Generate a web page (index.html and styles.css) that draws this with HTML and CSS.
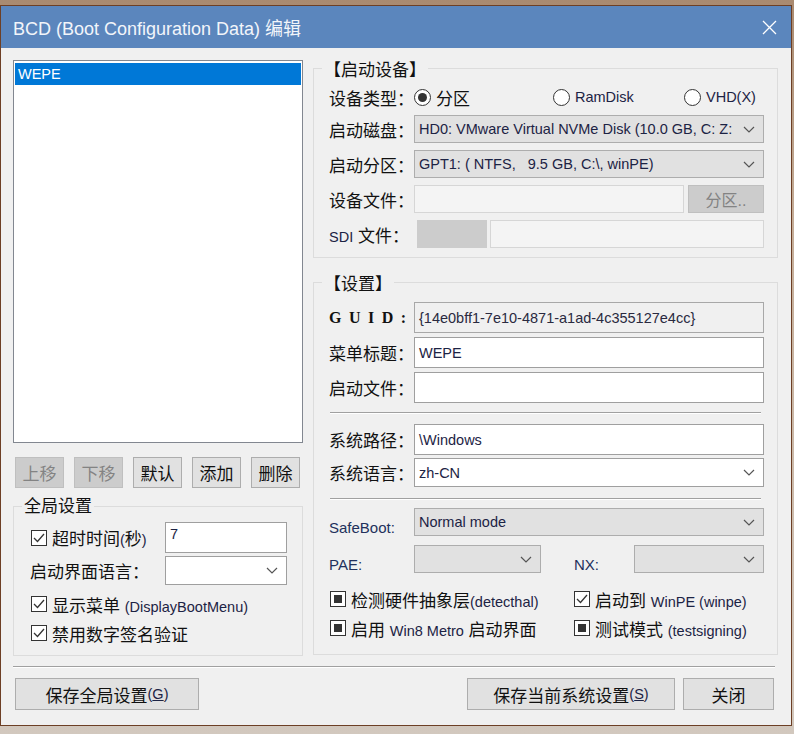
FILE: index.html
```html
<!DOCTYPE html>
<html lang="zh-CN">
	<head>
		<meta charset="UTF-8" />
		<meta name="viewport" content="width=device-width, initial-scale=1.0" />
		<title>BCD (Boot Configuration Data) 编辑</title>
		<link rel="stylesheet" href="styles.css">
	</head>
	<body>
		<div class="window">
			<div class="titlebar">
				<span class="title">BCD (Boot Configuration Data) 编辑</span>
				<svg class="close" width="15" height="15" viewBox="0 0 15 15">
					<path d="M1 1L14 14M14 1L1 14" stroke="#fff" stroke-width="1.3" fill="none" />
				</svg>
			</div>

			<div class="client">
				<div class="panes">
					<!-- boot entry list + global options -->
					<div class="left">
						<div class="listbox">
							<div class="list-item selected">WEPE</div>
						</div>

						<div class="list-buttons">
							<button class="btn disabled">上移</button>
							<button class="btn disabled">下移</button>
							<button class="btn">默认</button>
							<button class="btn">添加</button>
							<button class="btn">删除</button>
						</div>

						<div class="group global">
							<span class="group-title">全局设置</span>
							<div class="row timeout">
								<span class="check"><span class="box checked"><svg width="12" height="10" viewBox="0 0 12 10"><path d="M1 5L4.5 8.5L11 1" /></svg></span><span class="text">超时时间<span class="en">(</span>秒<span class="en">)</span></span></span>
								<div class="textbox small">7</div>
							</div>
							<div class="row lang">
								<span class="label">启动界面语言：</span>
								<div class="combo white small"><span class="value"></span><svg class="chevron" width="12" height="7" viewBox="0 0 12 7"><path d="M1 1L6 6L11 1" /></svg></div>
							</div>
							<div class="row check-row">
								<span class="check"><span class="box checked"><svg width="12" height="10" viewBox="0 0 12 10"><path d="M1 5L4.5 8.5L11 1" /></svg></span><span class="text">显示菜单 <span class="en">(DisplayBootMenu)</span></span></span>
							</div>
							<div class="row check-row">
								<span class="check"><span class="box checked"><svg width="12" height="10" viewBox="0 0 12 10"><path d="M1 5L4.5 8.5L11 1" /></svg></span><span class="text">禁用数字签名验证</span></span>
							</div>
						</div>
					</div>

					<!-- selected entry -->
					<div class="right">
						<div class="group device">
							<span class="group-title">【启动设备】</span>
							<div class="row radios">
								<span class="label">设备类型：</span>
								<span class="radio-item part"><span class="radio on"></span>分区</span>
								<span class="radio-item ram"><span class="radio"></span><span class="en">RamDisk</span></span>
								<span class="radio-item"><span class="radio"></span><span class="en">VHD(X)</span></span>
							</div>
							<div class="row">
								<span class="label">启动磁盘：</span>
								<div class="combo"><span class="value">HD0: VMware Virtual NVMe Disk (10.0 GB, C: Z:</span><svg class="chevron" width="12" height="7" viewBox="0 0 12 7"><path d="M1 1L6 6L11 1" /></svg></div>
							</div>
							<div class="row">
								<span class="label">启动分区：</span>
								<div class="combo"><span class="value">GPT1: ( NTFS,&nbsp;&nbsp; 9.5 GB, C:\, winPE)</span><svg class="chevron" width="12" height="7" viewBox="0 0 12 7"><path d="M1 1L6 6L11 1" /></svg></div>
							</div>
							<div class="row">
								<span class="label">设备文件：</span>
								<div class="textbox disabled"></div>
								<button class="btn disabled part-btn">分区..</button>
							</div>
							<div class="row">
								<span class="label"><span class="en">SDI</span> 文件：</span>
								<div class="sdi-block"></div>
								<div class="textbox disabled"></div>
							</div>
						</div>

						<div class="group settings">
							<span class="group-title">【设置】</span>
							<div class="row">
								<span class="label guid">GUID:</span>
								<div class="textbox readonly">{14e0bff1-7e10-4871-a1ad-4c355127e4cc}</div>
							</div>
							<div class="row gap4">
								<span class="label">菜单标题：</span>
								<div class="textbox">WEPE</div>
							</div>
							<div class="row gap4">
								<span class="label">启动文件：</span>
								<div class="textbox"></div>
							</div>

							<div class="rule sep-a"></div>

							<div class="row">
								<span class="label">系统路径：</span>
								<div class="textbox">\Windows</div>
							</div>
							<div class="row gap3">
								<span class="label">系统语言：</span>
								<div class="combo white"><span class="value">zh-CN</span><svg class="chevron" width="12" height="7" viewBox="0 0 12 7"><path d="M1 1L6 6L11 1" /></svg></div>
							</div>

							<div class="rule sep-b"></div>

							<div class="row low">
								<span class="label en">SafeBoot:</span>
								<div class="combo"><span class="value">Normal mode</span><svg class="chevron" width="12" height="7" viewBox="0 0 12 7"><path d="M1 1L6 6L11 1" /></svg></div>
							</div>
							<div class="row low pae">
								<span class="label en">PAE:</span>
								<div class="combo pae-box"><span class="value"></span><svg class="chevron" width="12" height="7" viewBox="0 0 12 7"><path d="M1 1L6 6L11 1" /></svg></div>
								<span class="label en nx">NX:</span>
								<div class="combo"><span class="value"></span><svg class="chevron" width="12" height="7" viewBox="0 0 12 7"><path d="M1 1L6 6L11 1" /></svg></div>
							</div>

							<div class="row flags first">
								<span class="check col"><span class="box mixed"></span><span class="text">检测硬件抽象层<span class="en">(detecthal)</span></span></span>
								<span class="check"><span class="box checked"><svg width="12" height="10" viewBox="0 0 12 10"><path d="M1 5L4.5 8.5L11 1" /></svg></span><span class="text">启动到 <span class="en">WinPE (winpe)</span></span></span>
							</div>
							<div class="row flags">
								<span class="check col"><span class="box mixed"></span><span class="text">启用 <span class="en">Win8 Metro</span> 启动界面</span></span>
								<span class="check"><span class="box mixed"></span><span class="text">测试模式 <span class="en">(testsigning)</span></span></span>
							</div>
						</div>
					</div>
				</div>

				<div class="rule footer-rule"></div>

				<div class="footer">
					<button class="btn save-global">保存全局设置<span class="en">(<u>G</u>)</span></button>
					<span class="spacer"></span>
					<button class="btn save-entry">保存当前系统设置<span class="en">(<u>S</u>)</span></button>
					<button class="btn close-btn">关闭</button>
				</div>
			</div>
		</div>
	</body>
</html>
```

FILE: styles.css
```css
* {
	margin: 0;
	padding: 0;
	box-sizing: border-box;
}

body {
	width: 794px;
	height: 734px;
	overflow: hidden;
	font-family: "Liberation Sans", "Noto Sans CJK SC", sans-serif;
	font-size: 17px;
	color: #111;
	background: linear-gradient(180deg, #a98a70 0, #c4ad98 30%, #d2c8be 100%);
}

.en {
	font-size: 14.5px;
	color: #1c2344;
}

button {
	font: inherit;
	color: inherit;
}

/* window frame */

.window {
	margin-top: 5px;
	width: 792px;
	height: 721px;
	border: 1px solid #6d3f25;
	background: #f0f0f0;
	display: flex;
	flex-direction: column;
}

.titlebar {
	height: 42px;
	flex: none;
	background: #5b86bd;
	color: #f2f5fa;
	font-size: 18px;
	display: flex;
	align-items: center;
	justify-content: space-between;
	padding: 0 14px 0 12px;
}

.close {
	display: block;
}

.client {
	flex: 1;
	display: flex;
	flex-direction: column;
	padding: 12px 0 0 12px;
}

.panes {
	display: flex;
	gap: 10px;
}

.left {
	width: 290px;
	flex: none;
}

.right {
	width: 465px;
	flex: none;
}

/* list of boot entries */

.listbox {
	height: 383px;
	background: #fff;
	border: 1px solid #828790;
	padding: 2px 1px;
}

.list-item {
	height: 22px;
	line-height: 22px;
	padding-left: 3px;
	font-size: 14.5px;
}

.list-item.selected {
	background: #0078d7;
	color: #fff;
}

.list-buttons {
	display: flex;
	gap: 10px;
	margin-top: 14px;
	padding-left: 2px;
}

.list-buttons .btn {
	width: 49px;
}

/* buttons */

.btn {
	height: 31px;
	border: 1px solid #adadad;
	background: #e1e1e1;
	display: flex;
	align-items: center;
	justify-content: center;
	cursor: default;
}

.btn.disabled {
	background: #cccccc;
	border-color: #bfbfbf;
	color: #838383;
}

/* group boxes */

.group {
	position: relative;
	border: 1px solid #dcdcdc;
}

.group-title {
	position: absolute;
	top: -11px;
	left: 8px;
	padding: 0 2px;
	line-height: 22px;
	background: #f0f0f0;
}

.global {
	margin-top: 18px;
	height: 150px;
	padding: 15px 15px 0 16px;
}

.device {
	margin-top: 8px;
	height: 190px;
	padding: 17px 13px 0 15px;
	display: flex;
	flex-direction: column;
	gap: 7px;
}

.device .group-title,
.settings .group-title {
	top: -9px;
}

.settings {
	margin-top: 24px;
	height: 373px;
	padding: 19px 13px 0 15px;
}

.row {
	display: flex;
	align-items: center;
}

.label {
	width: 85px;
	flex: none;
	white-space: nowrap;
}

.label.en {
	font-size: 15px;
	color: #22305c;
}

.guid {
	font-family: "Liberation Serif", serif;
	font-weight: bold;
	font-size: 16px;
	letter-spacing: 7.5px;
}

.gap4 {
	margin-top: 4px;
}

.gap3 {
	margin-top: 3px;
}

/* inputs */

.textbox {
	flex: 1;
	height: 31px;
	background: #fff;
	border: 1px solid #9f9f9f;
	padding-left: 4px;
	font-size: 14.5px;
	color: #1c2344;
	display: flex;
	align-items: center;
	white-space: nowrap;
}

.textbox.readonly {
	background: #f0f0f0;
	border-color: #a8a8a8;
	color: #2a2a40;
}

.textbox.disabled {
	height: 28px;
	background: #f4f4f4;
	border-color: #d6d6d6;
}

.combo {
	flex: 1;
	height: 28px;
	background: #e1e1e1;
	border: 1px solid #adadad;
	padding-left: 4px;
	font-size: 14.5px;
	color: #1c2344;
	display: flex;
	align-items: center;
	overflow: hidden;
}

.combo.white {
	height: 29px;
	background: #fff;
	border-color: #9f9f9f;
}

.combo .value {
	flex: 1;
	white-space: nowrap;
	overflow: hidden;
}

.chevron {
	flex: none;
	margin: 0 8px 0 4px;
}

.chevron path {
	fill: none;
	stroke: #555;
	stroke-width: 1.2;
}

.part-btn {
	width: 76px;
	height: 28px;
	margin-left: 4px;
	font-size: 16px;
}

.sdi-block {
	width: 70px;
	height: 28px;
	margin: 0 3px 0 3px;
	background: #cccccc;
}

.rule {
	height: 2px;
	border-top: 1px solid #a0a0a0;
	border-bottom: 1px solid #fff;
}

.sep-a {
	margin: 9px 3px 10px 1px;
}

.sep-b {
	margin: 11px 3px 8px 1px;
}

.low {
	align-items: flex-end;
}

.low .label {
	line-height: 18px;
	margin-bottom: -1px;
}

.pae {
	margin-top: 9px;
}

.pae-box {
	flex: none;
	width: 127px;
}

.label.nx {
	width: 60px;
	margin-left: 33px;
}

/* radio buttons and check boxes */

.radio-item {
	display: flex;
	align-items: center;
}

.radio-item.part {
	width: 139px;
}

.radio-item.ram {
	width: 131px;
}

.radios {
	height: 22px;
}

.radio {
	width: 17px;
	height: 17px;
	border: 1px solid #333;
	border-radius: 50%;
	background: #fff;
	margin-right: 5px;
	display: flex;
	align-items: center;
	justify-content: center;
}

.radio.on::after {
	content: "";
	width: 9px;
	height: 9px;
	border-radius: 50%;
	background: #333;
}

.check {
	display: flex;
	align-items: center;
	white-space: nowrap;
}

.box {
	width: 16px;
	height: 16px;
	flex: none;
	border: 1px solid #333;
	background: #fff;
	margin-right: 5px;
	display: flex;
	align-items: center;
	justify-content: center;
}

.box path {
	fill: none;
	stroke: #333;
	stroke-width: 1.3;
}

.box.mixed::after {
	content: "";
	width: 8px;
	height: 8px;
	background: #333;
}

.timeout {
	height: 31px;
	padding-left: 1px;
}

.timeout .check {
	width: 134px;
}

.textbox.small {
	flex: none;
	width: 122px;
	align-items: flex-start;
	padding-top: 3px;
}

.lang {
	margin-top: 3px;
	padding-left: 0;
}

.lang .label {
	width: 135px;
}

.combo.small {
	flex: none;
	width: 122px;
}

.check-row {
	height: 20px;
	margin-top: 9px;
	padding-left: 1px;
}

.flags {
	height: 20px;
	margin-top: 9px;
	padding-left: 1px;
}

.flags.first {
	margin-top: 16px;
}

.flags .col {
	width: 244px;
}

/* bottom buttons */

.footer-rule {
	margin: 10px 16px 0 0;
}

.footer {
	display: flex;
	gap: 8px;
	margin-top: 10px;
	padding: 0 17px 0 2px;
}

.footer .btn {
	height: 32px;
}

.save-global {
	width: 184px;
}

.spacer {
	flex: 1;
}

.save-entry {
	width: 208px;
}

.close-btn {
	width: 91px;
}
```
